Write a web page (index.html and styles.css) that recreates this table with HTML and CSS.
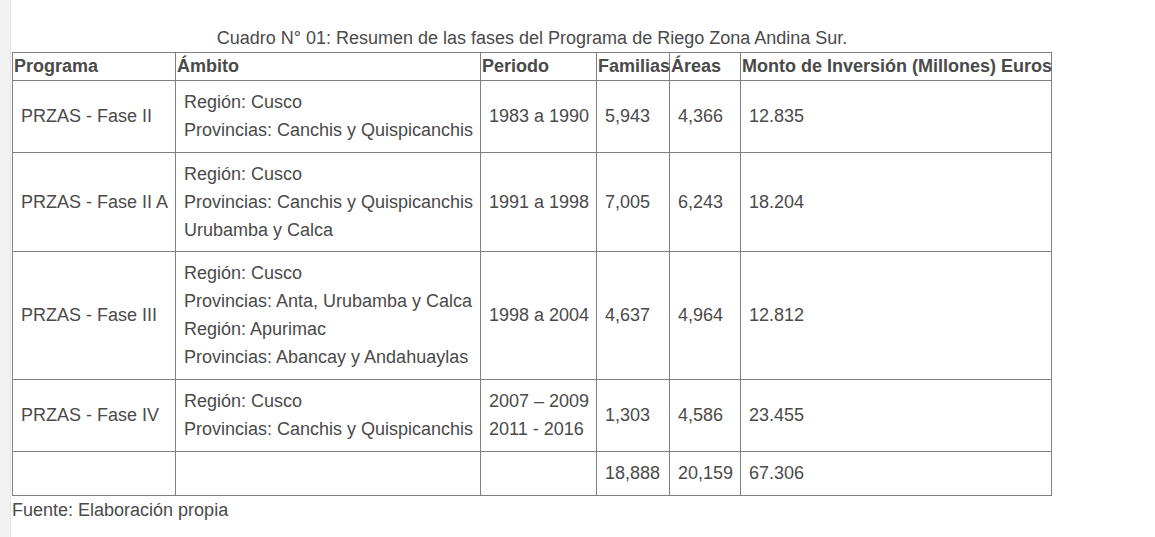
FILE: index.html
```html
<!DOCTYPE html>
<html lang="es">
<head>
<meta charset="utf-8">
<title>Cuadro N° 01</title>
<link rel="stylesheet" href="styles.css">
</head>
<body>
<div class="page">
  <div class="strip"></div>
  <main class="content">
    <table class="fases">
      <caption>Cuadro N° 01: Resumen de las fases del Programa de Riego Zona Andina Sur.</caption>
      <colgroup>
        <col class="c1"><col class="c2"><col class="c3"><col class="c4"><col class="c5"><col class="c6">
      </colgroup>
      <thead>
        <tr>
          <th>Programa</th>
          <th>Ámbito</th>
          <th>Periodo</th>
          <th>Familias</th>
          <th>Áreas</th>
          <th>Monto de Inversión (Millones) Euros</th>
        </tr>
      </thead>
      <tbody>
        <tr>
          <td>PRZAS - Fase II</td>
          <td>Región: Cusco<br>Provincias: Canchis y Quispicanchis</td>
          <td>1983 a 1990</td>
          <td>5,943</td>
          <td>4,366</td>
          <td>12.835</td>
        </tr>
        <tr class="tight">
          <td>PRZAS - Fase II A</td>
          <td>Región: Cusco<br>Provincias: Canchis y Quispicanchis<br>Urubamba y Calca</td>
          <td>1991 a 1998</td>
          <td>7,005</td>
          <td>6,243</td>
          <td>18.204</td>
        </tr>
        <tr>
          <td>PRZAS - Fase III</td>
          <td>Región: Cusco<br>Provincias: Anta, Urubamba y Calca<br>Región: Apurimac<br>Provincias: Abancay y Andahuaylas</td>
          <td>1998 a 2004</td>
          <td>4,637</td>
          <td>4,964</td>
          <td>12.812</td>
        </tr>
        <tr>
          <td>PRZAS - Fase IV</td>
          <td>Región: Cusco<br>Provincias: Canchis y Quispicanchis</td>
          <td>2007 – 2009<br>2011 - 2016</td>
          <td>1,303</td>
          <td>4,586</td>
          <td>23.455</td>
        </tr>
        <tr>
          <td></td>
          <td></td>
          <td></td>
          <td>18,888</td>
          <td>20,159</td>
          <td>67.306</td>
        </tr>
      </tbody>
    </table>
    <p class="fuente">Fuente: Elaboración propia</p>
  </main>
</div>
</body>
</html>
```

FILE: styles.css
```css
html, body {
  margin: 0;
  padding: 0;
  background: #ffffff;
}

body {
  font-family: "Liberation Sans", Arial, sans-serif;
  font-size: 18px;
  color: #4a4a4a;
}

.page {
  display: flex;
  min-height: 537px;
}

.strip {
  flex: 0 0 10px;
  background: #f2f2f2;
  border-right: 1px solid #e2e2e2;
}

.content {
  padding: 24px 0 0 1px;
}

.fases {
  border-collapse: collapse;
  table-layout: fixed;
  width: 1039px;
  line-height: 28px;
}

.fases caption {
  text-align: center;
  line-height: 28px;
}

.c1 { width: 163px; }
.c2 { width: 305px; }
.c3 { width: 116px; }
.c4 { width: 73px; }
.c5 { width: 71px; }
.c6 { width: 311px; }

.fases th,
.fases td {
  border: 1px solid #808080;
  text-align: left;
  vertical-align: middle;
  white-space: nowrap;
}

.fases th {
  font-weight: bold;
  padding: 0 1px;
  line-height: 27px;
}

.fases td {
  padding: 7px 8px 8px 8px;
}

.fases .tight td {
  padding-bottom: 7px;
}

.fuente {
  margin: 0;
  line-height: 28px;
}
```
